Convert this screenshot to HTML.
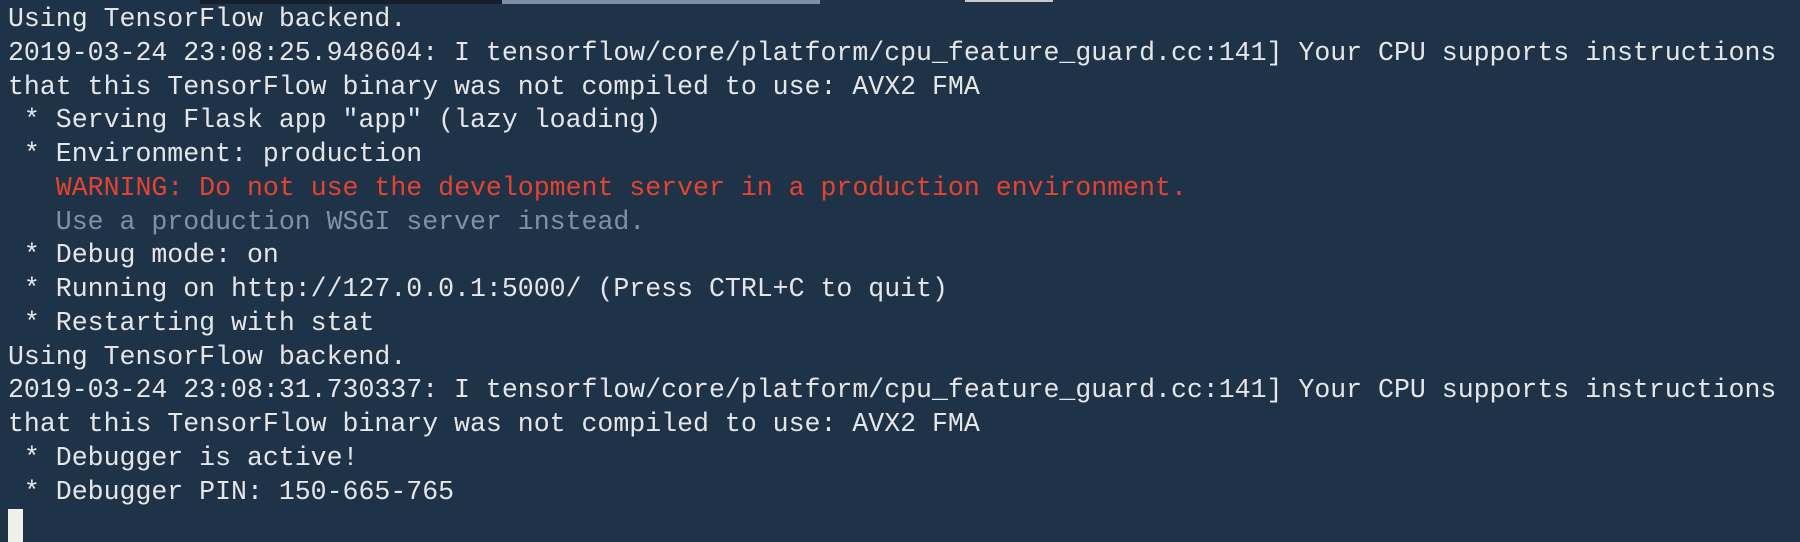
<!DOCTYPE html>
<html><head><style>
html,body{margin:0;padding:0;}
body{width:1800px;height:542px;background:#1f3348;overflow:hidden;position:relative;}
pre{margin:0;position:absolute;left:8px;top:3px;font-family:"Liberation Mono",monospace;font-size:26.55px;line-height:33.75px;color:#e6e6e6;white-space:pre;}
.r{color:#e5422f}.g{color:#8291a0}
.cur{position:absolute;left:8px;top:509px;width:15px;height:33px;background:#f0f0ea;}
.t1{position:absolute;left:200px;top:0;width:302px;height:4px;background:#15202c;}
.t2{position:absolute;left:502px;top:0;width:318px;height:4px;background:#7d8ea6;}
.t3{position:absolute;left:965px;top:0;width:88px;height:2px;background:#c8c8c8;}
</style></head><body>
<div class="t1"></div><div class="t2"></div><div class="t3"></div>
<pre>Using TensorFlow backend.
2019-03-24 23:08:25.948604: I tensorflow/core/platform/cpu_feature_guard.cc:141] Your CPU supports instructions
that this TensorFlow binary was not compiled to use: AVX2 FMA
 * Serving Flask app "app" (lazy loading)
 * Environment: production
   <span class="r">WARNING: Do not use the development server in a production environment.</span>
   <span class="g">Use a production WSGI server instead.</span>
 * Debug mode: on
 * Running on http://127.0.0.1:5000/ (Press CTRL+C to quit)
 * Restarting with stat
Using TensorFlow backend.
2019-03-24 23:08:31.730337: I tensorflow/core/platform/cpu_feature_guard.cc:141] Your CPU supports instructions
that this TensorFlow binary was not compiled to use: AVX2 FMA
 * Debugger is active!
 * Debugger PIN: 150-665-765</pre>
<div class="cur"></div>
</body></html>
